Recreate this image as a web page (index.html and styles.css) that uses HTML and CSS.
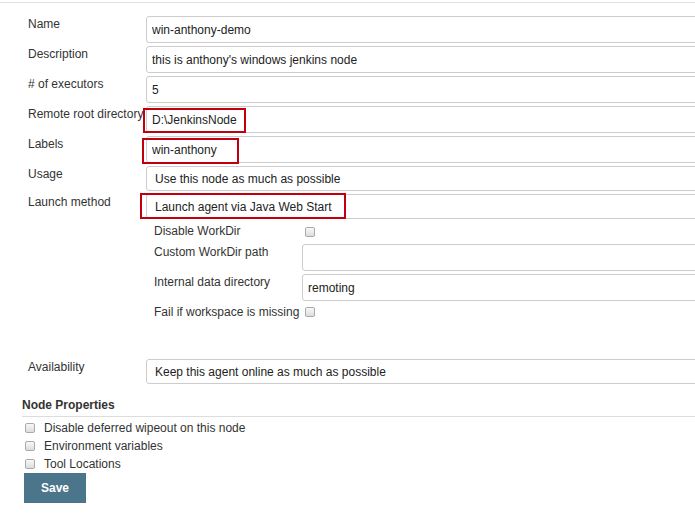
FILE: index.html
```html
<!DOCTYPE html>
<html lang="en">
<head>
  <meta charset="UTF-8" />
  <title>win-anthony-demo Configuration</title>
  <link rel="stylesheet" href="styles.css">
</head>
<body>
  <div class="topline"></div>

  <form class="config">
    <label class="lbl">Name</label>
    <div class="field"><input class="text" type="text" value="win-anthony-demo" /></div>

    <label class="lbl">Description</label>
    <div class="field"><input class="text" type="text" value="this is anthony's windows jenkins node" /></div>

    <label class="lbl"># of executors</label>
    <div class="field"><input class="text" type="text" value="5" /></div>

    <label class="lbl">Remote root directory</label>
    <div class="field">
      <input class="text" type="text" value="D:\JenkinsNode" />
      <span class="mark mark-root"></span>
    </div>

    <label class="lbl">Labels</label>
    <div class="field">
      <input class="text" type="text" value="win-anthony" />
      <span class="mark mark-labels"></span>
    </div>

    <label class="lbl">Usage</label>
    <div class="field">
      <select class="dropdown"><option>Use this node as much as possible</option></select>
    </div>

    <label class="lbl">Launch method</label>
    <div class="field">
      <select class="dropdown"><option>Launch agent via Java Web Start</option></select>
      <span class="mark mark-launch"></span>
    </div>

    <div></div>
    <div class="launch-opts">
      <span class="sub-lbl check-row">Disable WorkDir</span>
      <span class="check-cell"><input class="box" type="checkbox" /></span>

      <span class="sub-lbl">Custom WorkDir path</span>
      <span><input class="text" type="text" value="" /></span>

      <span class="sub-lbl">Internal data directory</span>
      <span><input class="text" type="text" value="remoting" /></span>

      <span class="sub-lbl check-row short">Fail if workspace is missing</span>
      <span class="check-cell"><input class="box" type="checkbox" /></span>
    </div>

    <label class="lbl spaced">Availability</label>
    <div class="field spaced">
      <select class="dropdown"><option>Keep this agent online as much as possible</option></select>
    </div>
  </form>

  <h3 class="props-title">Node Properties</h3>
  <ul class="props">
    <li><input class="box" type="checkbox" /> Disable deferred wipeout on this node</li>
    <li><input class="box" type="checkbox" /> Environment variables</li>
    <li><input class="box" type="checkbox" /> Tool Locations</li>
  </ul>

  <button class="save" type="button">Save</button>
</body>
</html>
```

FILE: styles.css
```css
html, body {
  margin: 0;
  overflow: hidden;
}
body {
  font-family: "Liberation Sans", Arial, sans-serif;
  font-size: 12px;
  color: #333;
  background: #fff;
}
.topline {
  margin-top: 2px;
  border-top: 1px solid #e0e2da;
}
.config {
  display: grid;
  grid-template-columns: 118px 580px;
  row-gap: 3px;
  margin: 13px 0 0;
  padding-left: 28px;
}
.lbl {
  padding-top: 1px;
  line-height: 14px;
  white-space: nowrap;
}
.field {
  position: relative;
}
.text {
  display: block;
  width: 100%;
  height: 27px;
  box-sizing: border-box;
  padding: 0 5px;
  border: 1px solid #ccc;
  border-radius: 3px;
  font-family: inherit;
  font-size: 12px;
  color: #222;
  background: #fff;
}
.dropdown {
  display: block;
  width: 100%;
  height: 25px;
  box-sizing: border-box;
  padding: 0 8px;
  border: 1px solid #ccc;
  border-radius: 3px;
  font-family: inherit;
  font-size: 12px;
  color: #222;
  background: #fff;
  appearance: none;
  -webkit-appearance: none;
}
.mark {
  position: absolute;
  box-sizing: border-box;
  border: 2px solid #c0000c;
}
.mark-root {
  left: -3px;
  top: 2px;
  width: 103px;
  height: 25px;
}
.mark-labels {
  left: -4px;
  top: 2px;
  width: 97px;
  height: 26px;
}
.mark-launch {
  left: -6px;
  top: -1px;
  width: 206px;
  height: 26px;
}
.launch-opts {
  display: grid;
  grid-template-columns: 148px 1fr;
  row-gap: 3px;
  padding-left: 8px;
}
.sub-lbl {
  padding-top: 1px;
  line-height: 14px;
  white-space: nowrap;
}
.check-row {
  padding-top: 0;
  line-height: 19px;
}
.check-row.short {
  line-height: 16px;
}
.check-cell {
  display: flex;
  align-items: center;
  padding-left: 3px;
}
.box {
  appearance: none;
  -webkit-appearance: none;
  width: 10px;
  height: 10px;
  margin: 0;
  border: 1px solid #aaa;
  border-radius: 2px;
  background: linear-gradient(#f8f8f8, #dcdcdc);
  flex: none;
}
.spaced {
  margin-top: 36px;
}
.props-title {
  margin: 14px 0 0 22px;
  padding-bottom: 4px;
  border-bottom: 1px solid #ddd;
  font-size: 12px;
  line-height: 14px;
  font-weight: bold;
  color: #333;
}
.props {
  list-style: none;
  margin: 2px 0 0;
  padding: 0 0 0 25px;
}
.props li {
  display: flex;
  align-items: center;
  gap: 9px;
  height: 18px;
}
.save {
  display: block;
  margin-left: 24px;
  width: 62px;
  height: 30px;
  border: none;
  background-color: #4b758b;
  color: #fff;
  font-family: inherit;
  font-size: 12px;
  font-weight: bold;
}
```
